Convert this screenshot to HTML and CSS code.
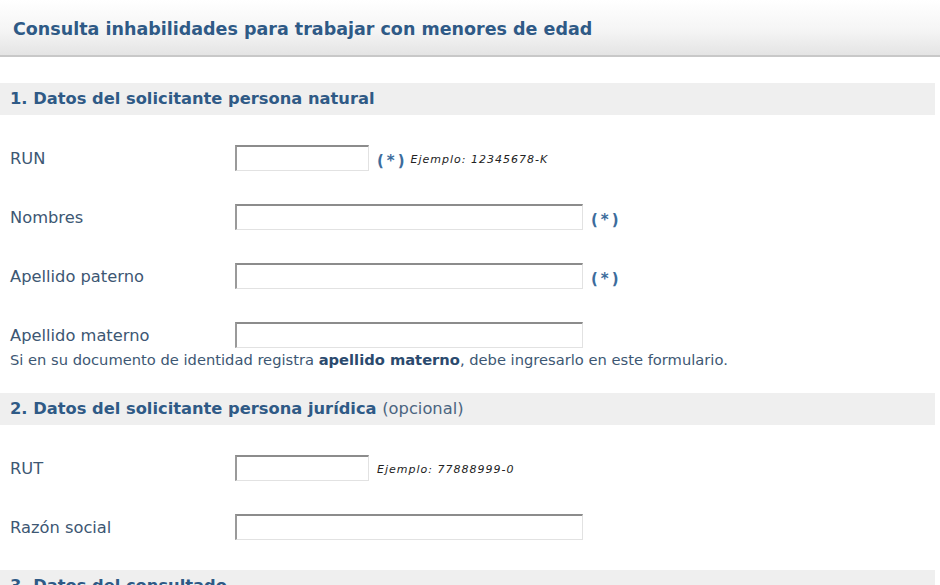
FILE: index.html
```html
<!DOCTYPE html>
<html lang="es">
<head>
  <meta charset="UTF-8" />
  <title>Consulta inhabilidades</title>
  <link rel="stylesheet" href="styles.css">
</head>
<body>
  <div class="header">
    <h1>Consulta inhabilidades para trabajar con menores de edad</h1>
  </div>

  <form class="form">
    <h2 class="section">1. Datos del solicitante persona natural</h2>

    <div class="row">
      <label for="run">RUN</label>
      <input type="text" id="run" class="short" />
      <span class="req">(*)</span>
      <span class="example">Ejemplo: 12345678-K</span>
    </div>

    <div class="row">
      <label for="nombres">Nombres</label>
      <input type="text" id="nombres" class="long" />
      <span class="req">(*)</span>
    </div>

    <div class="row">
      <label for="paterno">Apellido paterno</label>
      <input type="text" id="paterno" class="long" />
      <span class="req">(*)</span>
    </div>

    <div class="row">
      <label for="materno">Apellido materno</label>
      <input type="text" id="materno" class="long" />
    </div>
    <p class="note">Si en su documento de identidad registra <b>apellido materno</b>, debe ingresarlo en este formulario.</p>

    <h2 class="section">2. Datos del solicitante persona jurídica <span class="opt">(opcional)</span></h2>

    <div class="row">
      <label for="rut">RUT</label>
      <input type="text" id="rut" class="short" />
      <span class="example">Ejemplo: 77888999-0</span>
    </div>

    <div class="row">
      <label for="razon">Razón social</label>
      <input type="text" id="razon" class="long" />
    </div>

    <h2 class="section">3. Datos del consultado</h2>
  </form>
</body>
</html>
```

FILE: styles.css
```css
body {
  margin: 0;
  font-family: "DejaVu Sans", Verdana, sans-serif;
  background: #fff;
  color: #3d5773;
}

.header {
  height: 55px;
  background: linear-gradient(#ffffff, #f5f5f5 55%, #e4e4e4);
  border-bottom: 2px solid #c8c8c8;
  display: flex;
  align-items: center;
  padding-left: 13px;
}

.header h1 {
  margin: 0;
  font-size: 17.5px;
  font-weight: bold;
  color: #2f5a86;
  padding-top: 2px;
}

.form {
  padding: 26px 5px 0 0;
}

.section {
  margin: 0 0 30px 0;
  height: 32px;
  line-height: 32px;
  background: #efefef;
  padding-left: 10px;
  font-size: 16.3px;
  font-weight: bold;
  color: #2f5a86;
}

.section .opt {
  font-weight: normal;
  color: #4b6580;
}

.row {
  display: flex;
  align-items: center;
  height: 26px;
  margin-bottom: 33px;
  padding-left: 10px;
}

.row label {
  width: 225px;
  font-size: 16.3px;
  color: #3d5773;
}

input[type="text"] {
  height: 26px;
  box-sizing: border-box;
  border: 1px solid #e2e2e2;
  border-top: 2px solid #8c8c8c;
  border-left: 2px solid #9a9a9a;
  background: #fff;
  margin: 0;
}

.short {
  width: 134px;
}

.long {
  width: 348px;
}

.req {
  margin-left: 8px;
  font-size: 15px;
  font-weight: bold;
  letter-spacing: 3px;
  color: #3c6c9c;
  padding-top: 5px;
}

.example {
  font-size: 11px;
  font-style: italic;
  letter-spacing: 1px;
  color: #222;
  padding-top: 3px;
}

.req + .example {
  margin-left: 3px;
}

.short + .example {
  margin-left: 8px;
}

.row:has(+ .note) {
  margin-bottom: 2px;
}

.note {
  margin: 0 0 23px 10px;
  font-size: 14.7px;
  line-height: 20px;
  color: #3d5773;
}

.note b {
  color: #2b4a6e;
}

.row:has(+ .section) {
  margin-bottom: 30px;
}
```
